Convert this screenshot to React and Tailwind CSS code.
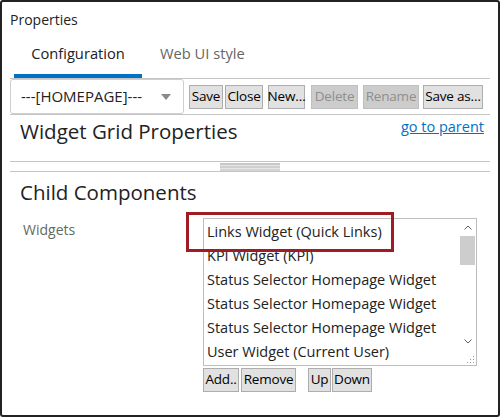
import React from "react";

const font = { fontFamily: '"Open Sans", "Noto Sans", sans-serif' };

const Btn = ({ children, disabled, w, ml }) => (
  <button
    className={
      (disabled
        ? "border-[#bfbfbf] bg-[#cccccc] text-[#8f8f8f]"
        : "border-[#adadad] bg-[#e1e1e1] text-black") +
      " h-[24px] border text-[13.5px] leading-none whitespace-nowrap flex items-center justify-center shrink-0 tracking-[-0.2px]"
    }
    style={{ width: w, marginLeft: ml }}
  >
    {children}
  </button>
);

const items = [
  "Links Widget (Quick Links)",
  "KPI Widget (KPI)",
  "Status Selector Homepage Widget",
  "Status Selector Homepage Widget",
  "Status Selector Homepage Widget",
  "User Widget (Current User)",
];

const App = () => {
  return (
    <div
      className="w-[500px] h-[417px] bg-white border-2 border-[#222] rounded-[3px] relative overflow-hidden text-[#222]"
      style={font}
    >
      {/* title */}
      <div className="h-[31px] pl-[8px] pt-[9px] text-[14px] leading-[18px]">Properties</div>

      {/* tabs */}
      <div className="flex pl-[12px] h-[45px]">
        <div className="w-[128px] flex flex-col">
          <div className="flex-1 flex items-center justify-center text-[14.7px] text-[#222]">Configuration</div>
          <div className="h-[4px] bg-[#0072c6]"></div>
        </div>
        <div className="w-[120px] flex items-center pl-[18px] pb-[4px] text-[14.7px] text-[#666]">Web UI style</div>
      </div>

      {/* toolbar */}
      <div className="ml-[8px] w-[480px] h-[37px] border-y border-[#c4c4c4] flex items-center">
        <div className="w-[174px] h-[35px] shrink-0 border border-[#cfcfcf] rounded-[3px] flex items-center justify-between pl-[10px] pr-[12px] text-[15px]">
          <span>---[HOMEPAGE]---</span>
          <svg width="10" height="6" viewBox="0 0 10 6">
            <path d="M0 0 L10 0 L5 6 Z" fill="#8a8a8a" />
          </svg>
        </div>
        <Btn w={34} ml={5}>Save</Btn>
        <Btn w={38} ml={2}>Close</Btn>
        <Btn w={37} ml={5}>New…</Btn>
        <Btn w={47} ml={6} disabled>Delete</Btn>
        <Btn w={56} ml={5} disabled>Rename</Btn>
        <Btn w={60} ml={4}>Save as…</Btn>
      </div>

      {/* widget grid heading */}
      <div className="h-[46px] flex items-start justify-between ml-[8px] w-[480px]">
        <div className="pl-[10px] pt-[2px] text-[20.5px] leading-[28px]">Widget Grid Properties</div>
        <a className="pr-[6px] pt-[1px] text-[14.5px] leading-[22px] text-[#0072c6] underline">go to parent</a>
      </div>

      {/* splitter */}
      <div className="ml-[8px] w-[480px] border-y border-[#c4c4c4] h-[11px] flex justify-center">
        <div className="w-[60px] flex flex-col pt-[1px]">
          <div className="h-[2px] bg-[#c8c8c8]"></div>
          <div className="h-[1px] bg-[#e6e6e6]"></div>
          <div className="h-[2px] bg-[#d0d0d0]"></div>
          <div className="h-[1px] bg-[#e6e6e6]"></div>
          <div className="h-[2px] bg-[#d4d4d4]"></div>
        </div>
      </div>

      {/* child components */}
      <div className="pl-[18px] pt-[6px] h-[36px] text-[20.5px] leading-[28px]">Child Components</div>

      <div className="flex pt-[10px]">
        <div className="w-[201px] pl-[21px] pt-[1px] text-[14px] text-[#5f6b5f]">Widgets</div>
        <div className="flex flex-col">
          <div className="relative w-[274px] h-[148px] border border-[#bdbdbd] flex">
            <div className="flex-1 overflow-hidden pl-[3px] pt-[1px]">
              {items.map((it, i) => (
                <div key={i} className="h-[24px] leading-[24px] text-[14.5px] whitespace-nowrap">
                  {it}
                </div>
              ))}
            </div>
            <div className="w-[17px] flex flex-col bg-white">
              <div className="h-[17px] flex items-center justify-center">
                <svg width="8" height="5" viewBox="0 0 8 5">
                  <path d="M0.5 4.5 L4 1 L7.5 4.5" fill="none" stroke="#606060" strokeWidth="1" />
                </svg>
              </div>
              <div className="flex-1 px-[1px]">
                <div className="h-[29px] bg-[#cdcdcd]"></div>
              </div>
              <div className="h-[17px] flex items-center justify-center">
                <svg width="8" height="5" viewBox="0 0 8 5">
                  <path d="M0.5 0.5 L4 4 L7.5 0.5" fill="none" stroke="#606060" strokeWidth="1" />
                </svg>
              </div>
              <div className="h-[15px] flex items-end justify-end pr-[1px] pb-[1px]">
                <svg width="8" height="8" viewBox="0 0 8 8">
                  <rect x="6" y="0" width="1" height="1" fill="#999" />
                  <rect x="3" y="3" width="1" height="1" fill="#999" />
                  <rect x="6" y="3" width="1" height="1" fill="#999" />
                  <rect x="0" y="6" width="1" height="1" fill="#999" />
                  <rect x="3" y="6" width="1" height="1" fill="#999" />
                  <rect x="6" y="6" width="1" height="1" fill="#999" />
                </svg>
              </div>
            </div>
            <div className="absolute left-[-18px] top-[-7px] w-[208px] h-[40px] border-[3px] border-[#a01c24]"></div>
          </div>
          <div className="flex mt-[2px]">
            <Btn w={36}>Add..</Btn>
            <Btn w={55} ml={2}>Remove</Btn>
            <Btn w={23} ml={12}>Up</Btn>
            <Btn w={40} ml={1}>Down</Btn>
          </div>
        </div>
      </div>
    </div>
  );
};

export default App;
